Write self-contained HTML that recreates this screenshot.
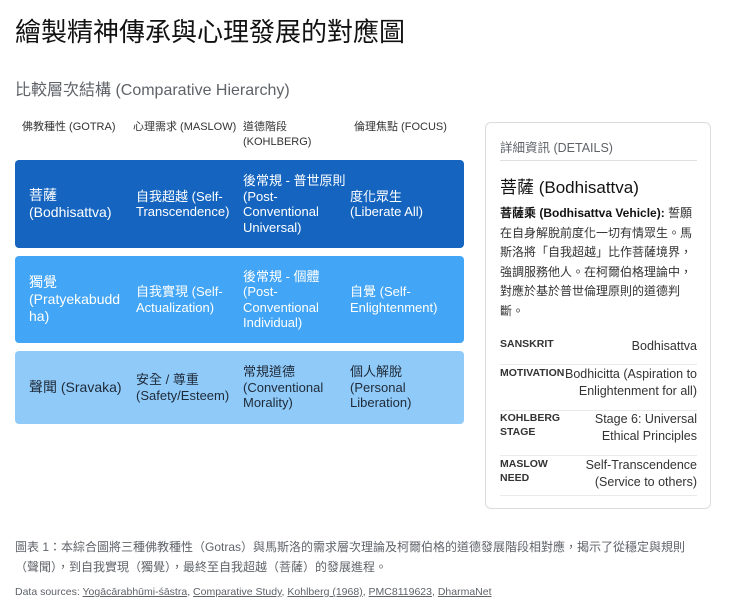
<!DOCTYPE html>
<html><head><meta charset="utf-8"><style>
*{margin:0;padding:0;box-sizing:border-box}
body{width:740px;height:611px;background:#fff;font-family:"Liberation Sans","Noto Sans CJK TC",sans-serif;color:#202124;position:relative;overflow:hidden}
.a{position:absolute}
h1{position:absolute;left:15px;top:12px;font-size:26px;font-weight:400;color:#111}
h2{position:absolute;left:15px;top:76px;font-size:16px;font-weight:400;color:#5f6368}
.hd{position:absolute;top:120px;font-size:11px;color:#333;line-height:15px}
.row{position:absolute;left:15px;width:449px;border-radius:4px}
.c{position:absolute;font-size:13px;line-height:15.5px;display:flex;align-items:center;height:100%;top:0}
.r1{background:#1565c0;color:#fff;top:160px;height:88px}
.r2{background:#42a5f5;color:#fff;top:256px;height:87px}
.r3{background:#90caf9;color:#1e2a38;top:351px;height:73px}
.g{font-size:14px;line-height:17px}
.card{position:absolute;left:485px;top:122px;width:226px;height:387px;border:1px solid #dadce0;border-radius:6px}
.kv{position:absolute;left:14px;width:197px;border-bottom:1px solid #e8eaed;font-size:12.5px;line-height:17px;color:#333}
.kv b{position:absolute;left:0;top:0;font-size:10.5px;font-weight:700;color:#333;line-height:14px}
.kv span{display:block;text-align:right}
.src a{color:#5f6368;text-decoration:underline}
</style></head><body>
<h1>繪製精神傳承與心理發展的對應圖</h1>
<h2>比較層次結構 (Comparative Hierarchy)</h2>
<div class="hd" style="left:22px">佛教種性 (GOTRA)</div>
<div class="hd" style="left:133px">心理需求 (MASLOW)</div>
<div class="hd" style="left:243px">道德階段<br>(KOHLBERG)</div>
<div class="hd" style="left:354px">倫理焦點 (FOCUS)</div>

<div class="row r1">
<div class="c g" style="left:14px;width:100px">菩薩<br>(Bodhisattva)</div>
<div class="c" style="left:121px;width:100px">自我超越 (Self-<br>Transcendence)</div>
<div class="c" style="left:228px;width:105px">後常規 - 普世原則<br>(Post-<br>Conventional<br>Universal)</div>
<div class="c" style="left:335px;width:100px">度化眾生<br>(Liberate All)</div>
</div>
<div class="row r2">
<div class="c g" style="left:14px;width:100px">獨覺<br>(Pratyekabudd<br>ha)</div>
<div class="c" style="left:121px;width:100px">自我實現 (Self-<br>Actualization)</div>
<div class="c" style="left:228px;width:105px">後常規 - 個體<br>(Post-<br>Conventional<br>Individual)</div>
<div class="c" style="left:335px;width:100px">自覺 (Self-<br>Enlightenment)</div>
</div>
<div class="row r3">
<div class="c g" style="left:14px;width:100px">聲聞 (Sravaka)</div>
<div class="c" style="left:121px;width:100px">安全 / 尊重<br>(Safety/Esteem)</div>
<div class="c" style="left:228px;width:105px">常規道德<br>(Conventional<br>Morality)</div>
<div class="c" style="left:335px;width:100px">個人解脫<br>(Personal<br>Liberation)</div>
</div>

<div class="card">
<div class="a" style="left:14px;top:14px;font-size:12.5px;color:#5f6368">詳細資訊 (DETAILS)</div>
<div class="a" style="left:14px;top:37px;width:197px;border-top:1px solid #e0e0e0"></div>
<div class="a" style="left:14px;top:50px;font-size:17px;color:#111">菩薩 (Bodhisattva)</div>
<div class="a" style="left:14px;top:81px;width:200px;font-size:12px;line-height:19.5px;color:#333"><b style="color:#111">菩薩乘 (Bodhisattva Vehicle):</b> 誓願在自身解脫前度化一切有情眾生。馬斯洛將「自我超越」比作菩薩境界，強調服務他人。在柯爾伯格理論中，對應於基於普世倫理原則的道德判斷。</div>
<div class="kv" style="top:214px;height:28px"><b>SANSKRIT</b><span style="padding-top:1px">Bodhisattva</span></div>
<div class="kv" style="top:242px;height:46px"><b style="top:1px">MOTIVATION</b><span style="padding-top:1px">Bodhicitta (Aspiration to<br>Enlightenment for all)</span></div>
<div class="kv" style="top:288px;height:45px"><b style="top:0px">KOHLBERG<br>STAGE</b><span style="padding-top:0px">Stage 6: Universal<br>Ethical Principles</span></div>
<div class="kv" style="top:333px;height:40px"><b style="top:1px">MASLOW<br>NEED</b><span style="padding-top:1px">Self-Transcendence<br>(Service to others)</span></div>
</div>

<div class="a" style="left:15px;top:537px;width:720px;font-size:12px;line-height:20px;color:#5f6368">圖表 1：本綜合圖將三種佛教種性（Gotras）與馬斯洛的需求層次理論及柯爾伯格的道德發展階段相對應，揭示了從穩定與規則<br>（聲聞），到自我實現（獨覺），最終至自我超越（菩薩）的發展進程。</div>
<div class="a src" style="left:15px;top:586px;font-size:10.5px;color:#5f6368">Data sources: <a>Yogācārabhūmi-śāstra</a>, <a>Comparative Study</a>, <a>Kohlberg (1968)</a>, <a>PMC8119623</a>, <a>DharmaNet</a></div>
</body></html>
